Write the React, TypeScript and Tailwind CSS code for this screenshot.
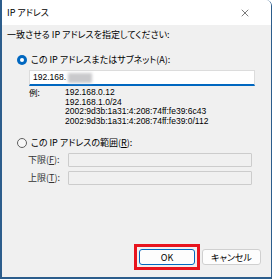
import { X } from "lucide-react";

const font = "[font-family:'Noto_Sans_CJK_JP','Liberation_Sans',sans-serif] [font-feature-settings:'palt']";

function Radio({ checked }: { checked?: boolean }) {
  return checked ? (
    <span className="w-[10px] h-[10px] rounded-full bg-[#0067c0] flex items-center justify-center shrink-0">
      <span className="w-[4px] h-[4px] rounded-full bg-white" />
    </span>
  ) : (
    <span className="w-[10px] h-[10px] rounded-full border border-[#5f5f5f] bg-[#f7f7f7] shrink-0" />
  );
}

const examples = [
  "192.168.0.12",
  "192.168.1.0/24",
  "2002:9d3b:1a31:4:208:74ff:fe39:6c43",
  "2002:9d3b:1a31:4:208:74ff:fe39:0/112",
];

export default function App() {
  return (
    <div className={`w-[272px] h-[280px] bg-white ${font} text-[9px] text-black`}>
      <div className="w-[272px] h-[279px] flex flex-col border-l-2 border-r border-b-2 border-[#2c5d8c] rounded-tr-[6px] overflow-hidden">
        <div className="h-[25px] bg-white flex items-center justify-between pl-[5px] pr-[20px] shrink-0">
          <span className="text-[9px]">IP アドレス</span>
          <X size={12} strokeWidth={1.2} className="text-[#222]" />
        </div>
        <div className="flex-1 bg-[#f0f0f0] flex flex-col pl-[5px]">
          <div className="mt-[4px] h-[12px] leading-[12px]">一致させる IP アドレスを指定してください:</div>
          <div className="mt-[13px] h-[12px] flex items-center gap-[4px] pl-[10px]">
            <Radio checked />
            <span className="leading-[12px]">この IP アドレスまたはサブネット(A):</span>
          </div>
          <div className="mt-[4px] ml-[22px] w-[226px] h-[16px] bg-white border border-[#dcdcdc] border-b-2 border-b-[#0067c0] flex items-center pl-[3px] text-[8.5px] [font-family:'Liberation_Sans',sans-serif]">
            192.168.
            <span className="ml-[2px] w-[24px] h-[10px] bg-[#c9c9cc] blur-[1.5px]" />
          </div>
          <div className="mt-[2px] ml-[22px] flex text-[8.5px] leading-[9.7px]">
            <span className="w-[36px]">例:</span>
            <div className="flex flex-col [font-family:'Liberation_Sans',sans-serif]">
              {examples.map((e) => (
                <span key={e}>{e}</span>
              ))}
            </div>
          </div>
          <div className="mt-[10px] h-[12px] flex items-center gap-[4px] pl-[10px]">
            <Radio />
            <span className="leading-[12px]">この IP アドレスの範囲(<span className="underline">R</span>):</span>
          </div>
          <div className="mt-[4px] flex items-center h-[14px]">
            <span className="ml-[21px] w-[40px] text-[#333]">下限(<span className="underline">F</span>):</span>
            <div className="w-[184px] h-[14px] bg-[#f0f0f0] border border-[#cccccc] rounded-[1px]" />
          </div>
          <div className="mt-[4px] flex items-center h-[14px]">
            <span className="ml-[21px] w-[40px] text-[#333]">上限(<span className="underline">T</span>):</span>
            <div className="w-[184px] h-[14px] bg-[#f0f0f0] border border-[#cccccc] rounded-[1px]" />
          </div>
          <div className="mt-auto mb-[7px] flex justify-end items-center gap-[2px] pr-[10px]">
            <div className="border-[3px] border-[#e8141e] p-[2px]">
              <button className="w-[56px] h-[16px] bg-[#fdfdfd] border border-[#0067c0] rounded-[3px] flex items-center justify-center text-[9px] leading-none">OK</button>
            </div>
            <button className="w-[59px] h-[16px] bg-[#fdfdfd] border border-[#d0d0d0] rounded-[3px] flex items-center justify-center text-[9px] leading-none">キャンセル</button>
          </div>
        </div>
      </div>
    </div>
  );
}
